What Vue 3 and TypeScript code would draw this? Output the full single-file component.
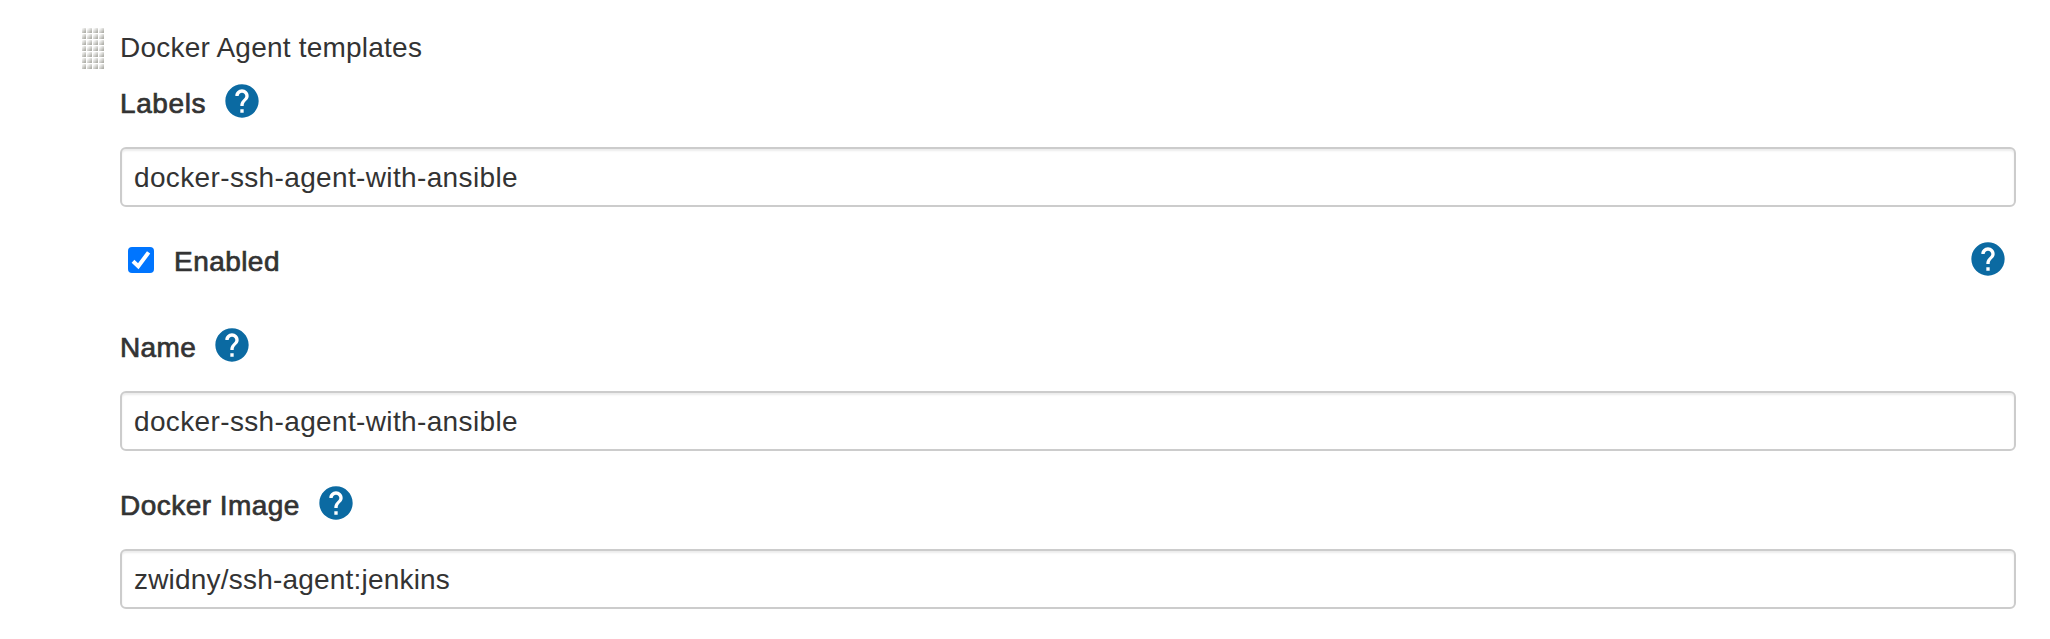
<script setup lang="ts">
import { ref } from 'vue'

interface Field {
  id: string
  label: string
  value: string
}

const labels = ref<Field>({ id: 'labels', label: 'Labels', value: 'docker-ssh-agent-with-ansible' })
const enabled = ref(true)
const fields = ref<Field[]>([
  { id: 'name', label: 'Name', value: 'docker-ssh-agent-with-ansible' },
  { id: 'image', label: 'Docker Image', value: 'zwidny/ssh-agent:jenkins' },
])
const helpPath =
  'M12 2C6.48 2 2 6.48 2 12s4.48 10 10 10 10-4.48 10-10S17.52 2 12 2zm1 17h-2v-2h2v2zm2.07-7.75l-.9.92C13.45 12.9 13 13.5 13 15h-2v-.5c0-1.1.45-2.1 1.17-2.83l1.24-1.26c.37-.36.59-.86.59-1.41 0-1.1-.9-2-2-2s-2 .9-2 2H8c0-2.21 1.79-4 4-4s4 1.79 4 4c0 .88-.36 1.68-.93 2.25z'
</script>

<template>
  <main class="panel">
    <svg class="handle" viewBox="0 0 22 42">
      <defs>
        <linearGradient id="grip-shade" x1="0" y1="0" x2="1" y2="1">
          <stop offset="0.15" stop-color="#fafaf9" />
          <stop offset="0.5" stop-color="#d6d6d3" />
          <stop offset="0.85" stop-color="#aeaea8" />
        </linearGradient>
        <pattern id="grip" width="6" height="6" x="-2" y="0" patternUnits="userSpaceOnUse">
          <rect x="1" y="1" width="5" height="5" rx="0.6" fill="url(#grip-shade)" />
        </pattern>
      </defs>
      <rect width="22" height="42" fill="url(#grip)" />
    </svg>
    <form class="form" @submit.prevent>
      <div class="title">Docker Agent templates</div>

      <section class="field first">
        <div class="heading">
          <label class="strong labels" :for="labels.id">{{ labels.label }}</label>
          <svg class="help" viewBox="0 0 24 24"><path :d="helpPath" /></svg>
        </div>
        <input :id="labels.id" v-model="labels.value" class="text" type="text" />
      </section>

      <div class="toggle">
        <label class="check">
          <input v-model="enabled" class="native" type="checkbox" />
          <svg class="box" viewBox="0 0 26 26">
            <rect width="26" height="26" rx="4" />
            <path v-if="enabled" d="M5 14.2 10.3 19.2 20.6 5.4" />
          </svg>
          <span class="strong enabled">Enabled</span>
        </label>
        <svg class="help" viewBox="0 0 24 24"><path :d="helpPath" /></svg>
      </div>

      <section v-for="field in fields" :key="field.id" class="field">
        <div class="heading">
          <label class="strong" :class="field.id" :for="field.id">{{ field.label }}</label>
          <svg class="help" viewBox="0 0 24 24"><path :d="helpPath" /></svg>
        </div>
        <input :id="field.id" v-model="field.value" class="text" :class="field.id" type="text" />
      </section>
    </form>
  </main>
</template>

<style>
body {
  margin: 0;
  background: #fff;
}
</style>

<style scoped>
.panel {
  box-sizing: border-box;
  height: 639px;
  display: flex;
  padding: 27px 34px 0 82px;
  font-family: "Liberation Sans", Arial, sans-serif;
  font-size: 28px;
  line-height: 40px;
  color: #333;
  background: #fff;
}
.handle {
  flex: none;
  width: 22px;
  height: 42px;
  margin-right: 16px;
}
.form {
  flex: 1;
  min-width: 0;
}
.title {
  box-sizing: border-box;
  height: 40px;
  padding-top: 1px;
  letter-spacing: 0.22px;
}
.field {
  height: 158px;
}
.field.first {
  height: 154px;
}
.heading {
  display: flex;
  height: 80px;
  align-items: flex-start;
}
.strong {
  letter-spacing: 0.45px;
  -webkit-text-stroke: 0.7px #333;
}
.strong.labels {
  letter-spacing: 0.6px;
}
.strong.image {
  letter-spacing: 0.46px;
}
.strong.name {
  letter-spacing: 0.35px;
}
.heading .strong {
  padding-top: 17px;
}
.help {
  flex: none;
  width: 40px;
  height: 40px;
  margin: 14px 0 0 16px;
  fill: #0b6aa2;
}
.text {
  display: block;
  box-sizing: border-box;
  width: 1896px;
  height: 60px;
  margin: 0;
  padding: 2px 12px 0;
  border: 2px solid #ccc;
  border-radius: 6px;
  box-shadow: inset 0 2px 2px rgba(0, 0, 0, 0.075);
  font: inherit;
  letter-spacing: 0.36px;
  color: #333;
  background: #fff;
  outline: none;
}
.text.image {
  letter-spacing: 0.2px;
}
.toggle {
  display: flex;
  justify-content: space-between;
  height: 90px;
  padding: 18px 8px 0;
  box-sizing: border-box;
}
.toggle .help {
  margin: 0;
}
.check {
  display: flex;
  align-items: flex-start;
}
.native {
  position: absolute;
  opacity: 0;
}
.box {
  width: 26px;
  height: 26px;
  margin: 8px 20px 0 0;
}
.box rect {
  fill: #0075ff;
}
.box path {
  fill: none;
  stroke: #fff;
  stroke-width: 4;
}
.enabled {
  padding-top: 3px;
}
</style>
